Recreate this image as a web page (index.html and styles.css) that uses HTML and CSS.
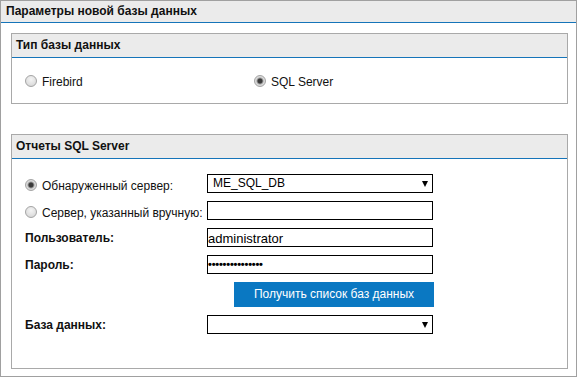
FILE: index.html
```html
<!DOCTYPE html>
<html lang="ru">
<head>
<meta charset="utf-8">
<title>Параметры новой базы данных</title>
<link rel="stylesheet" href="styles.css">
</head>
<body>
<div class="panel">
  <div class="panel-head">Параметры новой базы данных</div>
  <div class="panel-body">
    <section class="group">
      <div class="group-head">Тип базы данных</div>
      <div class="type-body">
        <label class="option opt-first"><span class="radio"></span>Firebird</label>
        <label class="option"><span class="radio checked"></span>SQL Server</label>
      </div>
    </section>
    <section class="group group-sql">
      <div class="group-head">Отчеты SQL Server</div>
      <div class="form">
        <label class="option lbl-radio"><span class="radio checked"></span>Обнаруженный сервер:</label>
        <div class="field select">ME_SQL_DB<span class="arrow"></span></div>

        <label class="option lbl-radio"><span class="radio"></span>Сервер, указанный вручную:</label>
        <div class="field"></div>

        <div class="lbl">Пользователь:</div>
        <div class="field text">administrator</div>

        <div class="lbl">Пароль:</div>
        <div class="field text dots">•••••••••••••••</div>

        <div></div>
        <div class="btn">Получить список баз данных</div>

        <div class="lbl">База данных:</div>
        <div class="field select"><span class="arrow"></span></div>
      </div>
    </section>
  </div>
</div>
</body>
</html>
```

FILE: styles.css
```css
html, body {
  margin: 0;
  padding: 0;
  background: #fff;
}

body {
  font-family: "Liberation Sans", Arial, sans-serif;
  font-size: 12px;
  color: #000;
}

.panel {
  width: 577px;
  box-sizing: border-box;
  border: 1px solid #a0a0a0;
  background: #fff;
}

.panel-head {
  height: 21px;
  line-height: 20px;
  padding-left: 5px;
  background: #ebebeb;
  border-bottom: 1px solid #1574b9;
  font-weight: bold;
  color: #111;
}

.panel-body {
  padding: 10px 8px 7px 10px;
}

.group {
  border: 1px solid #a9a9a9;
}

.group-sql {
  margin-top: 30px;
}

.group-head {
  height: 23px;
  line-height: 23px;
  padding-left: 4px;
  background: #ebebeb;
  border-bottom: 1px solid #1574b9;
  font-weight: bold;
  color: #111;
}

.type-body {
  height: 45px;
  display: flex;
  align-items: center;
  padding-left: 13px;
  padding-top: 2px;
  box-sizing: border-box;
}

.option {
  display: flex;
  align-items: center;
  color: #111;
}

.opt-first {
  width: 229px;
}

.radio {
  width: 12px;
  height: 12px;
  box-sizing: border-box;
  border-radius: 50%;
  border: 1px solid #a4a4a4;
  background: radial-gradient(circle at 50% 35%, #f4f4f4 0%, #e2e2e2 55%, #cfcfcf 100%);
  margin-right: 5px;
  flex: none;
  position: relative;
  top: -1px;
}

.radio.checked {
  background: radial-gradient(circle at 50% 50%, #3a3a3a 0, #3a3a3a 2px, #9a9a9a 3px, #dcdcdc 4px, #cfcfcf 100%);
}

.form {
  display: grid;
  grid-template-columns: 182px 226px;
  row-gap: 8px;
  align-items: center;
  padding: 15px 0 34px 13px;
}

.lbl-radio {
  padding-top: 4px;
}

.lbl {
  font-weight: bold;
  color: #111;
  padding-top: 1px;
}

.field {
  height: 19px;
  box-sizing: border-box;
  border: 1px solid #000;
  line-height: 17px;
  overflow: hidden;
  white-space: nowrap;
  position: relative;
  color: #000;
}

.select {
  padding-left: 5px;
}

.text {
  padding-left: 0;
  font-size: 13px;
  line-height: 19px;
}

.dots {
  font-size: 11px;
  font-weight: bold;
  letter-spacing: -0.2px;
  line-height: 17px;
}

.arrow {
  position: absolute;
  right: 4px;
  top: 6px;
  width: 0;
  height: 0;
  border-left: 3px solid transparent;
  border-right: 3px solid transparent;
  border-top: 6px solid #000;
}

.btn {
  margin-left: 27px;
  width: 200px;
  height: 25px;
  line-height: 25px;
  background: #0a78c2;
  color: #fff;
  text-align: center;
}
```
